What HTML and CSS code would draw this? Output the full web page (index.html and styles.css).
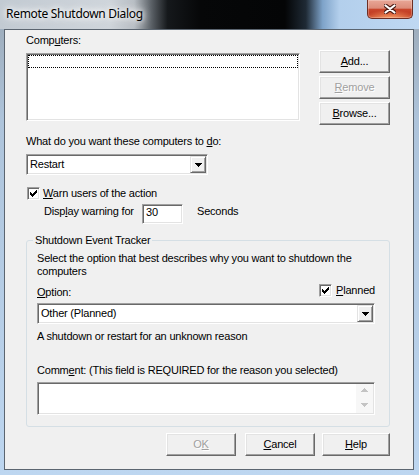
FILE: index.html
```html
<!DOCTYPE html>
<html>
<head>
<meta charset="utf-8">
<title>Remote Shutdown Dialog</title>
<link rel="stylesheet" href="styles.css">
</head>
<body>
<div class="window">
  <div class="titlebar">
    <span class="title">Remote Shutdown Dialog</span>
    <div class="close-btn">
      <svg width="12" height="10" viewBox="0 0 12 10">
        <path d="M1.5 1.5 L10.5 8.5 M10.5 1.5 L1.5 8.5" stroke="#4b1a12" stroke-width="4.2" stroke-linecap="round" fill="none"/>
        <path d="M1.5 1.5 L10.5 8.5 M10.5 1.5 L1.5 8.5" stroke="#ffffff" stroke-width="2.2" stroke-linecap="round" fill="none"/>
      </svg>
    </div>
  </div>
  <div class="client">
    <div class="top-row">
      <div class="computers">
        <div class="label">Comp<u>u</u>ters:</div>
        <div class="listbox sunken"><div class="focus-row"></div></div>
      </div>
      <div class="side-buttons">
        <div class="btn side"><span><u>A</u>dd...</span></div>
        <div class="btn side disabled"><span><u>R</u>emove</span></div>
        <div class="btn side"><span><u>B</u>rowse...</span></div>
      </div>
    </div>

    <div class="label action-label">What do you want these computers to <u>d</u>o:</div>
    <div class="combo sunken combo-action">
      <span class="combo-text">Restart</span>
      <span class="combo-btn"><svg width="7" height="4" viewBox="0 0 7 4"><path d="M0 0h7v1h-1v1h-1v1h-1v1h-1v-1h-1v-1h-1v-1h-1z" fill="#000"/></svg></span>
    </div>

    <div class="check-row warn-check">
      <span class="checkbox sunken"><svg width="7" height="7" viewBox="0 0 7 7"><path d="M0 2h1v3h-1zM1 3h1v3h-1zM2 4h1v3h-1zM3 3h1v3h-1zM4 2h1v3h-1zM5 1h1v3h-1zM6 0h1v3h-1z" fill="#000"/></svg></span>
      <span class="label"><u>W</u>arn users of the action</span>
    </div>

    <div class="warn-row">
      <span class="label warn-label">Disp<u>l</u>ay warning for</span>
      <div class="textbox sunken seconds-box">30</div>
      <span class="label seconds">Seconds</span>
    </div>

    <fieldset class="group">
      <legend>Shutdown Event Tracker</legend>
      <div class="group-body">
        <p class="label desc">Select the option that best describes why you want to shutdown the computers</p>
        <div class="option-row">
          <span class="label option-label"><u>O</u>ption:</span>
          <span class="planned">
            <span class="checkbox sunken"><svg width="7" height="7" viewBox="0 0 7 7"><path d="M0 2h1v3h-1zM1 3h1v3h-1zM2 4h1v3h-1zM3 3h1v3h-1zM4 2h1v3h-1zM5 1h1v3h-1zM6 0h1v3h-1z" fill="#000"/></svg></span>
            <span class="label"><u>P</u>lanned</span>
          </span>
        </div>
        <div class="combo sunken combo-reason">
          <span class="combo-text">Other (Planned)</span>
          <span class="combo-btn"><svg width="7" height="4" viewBox="0 0 7 4"><path d="M0 0h7v1h-1v1h-1v1h-1v1h-1v-1h-1v-1h-1v-1h-1z" fill="#000"/></svg></span>
        </div>
        <div class="label reason-desc">A shutdown or restart for an unknown reason</div>
        <div class="label comment-label">Comm<u>e</u>nt: (This field is REQUIRED for the reason you selected)</div>
        <div class="textarea sunken">
          <div class="ta-body"></div>
          <div class="scrollbar">
            <svg class="sb-arrow" width="7" height="4" viewBox="0 0 7 4"><path d="M3 0h1v1h1v1h1v1h1v1h-7v-1h1v-1h1v-1h1z" fill="#c4c4c4"/></svg>
            <svg class="sb-arrow" width="7" height="4" viewBox="0 0 7 4"><path d="M0 0h7v1h-1v1h-1v1h-1v1h-1v-1h-1v-1h-1v-1h-1z" fill="#c4c4c4"/></svg>
          </div>
        </div>
      </div>
    </fieldset>

    <div class="dialog-buttons">
      <div class="btn dlg ok disabled"><span>O<u>K</u></span></div>
      <div class="btn dlg cancel"><span><u>C</u>ancel</span></div>
      <div class="btn dlg help"><span><u>H</u>elp</span></div>
    </div>
  </div>
</div>
</body>
</html>
```

FILE: styles.css
```css
html, body {
  margin: 0;
  padding: 0;
}

body {
  font-family: "Liberation Sans", Arial, sans-serif;
  font-size: 11px;
  line-height: 13px;
  letter-spacing: -0.2px;
  color: #000;
}

.window {
  width: 419px;
  height: 475px;
  display: flex;
  flex-direction: column;
  overflow: hidden;
  background: linear-gradient(to bottom, #9aa7b4 0px, #aec4db 120px, #bdd6f0 475px);
}

/* ---------- title bar ---------- */
.titlebar {
  flex: none;
  height: 29px;
  display: flex;
  justify-content: space-between;
  align-items: flex-start;
  background: linear-gradient(to right,
    #c2cad2 0%, #cfd5db 26%, #b8bec4 32%, #5d6369 36%,
    #15181b 40%, #060708 48%, #040506 68%,
    #1f2a35 73%, #7ea3c9 77%, #b3cfec 81%, #bfd8f2 100%);
}

.title {
  font-family: "Noto Sans", "Open Sans", sans-serif;
  font-size: 12px;
  line-height: 16px;
  letter-spacing: -0.3px;
  padding: 6px 0 0 6px;
  color: #000;
  text-shadow: 0 0 5px #fff, 0 0 9px #fff, 0 0 12px rgba(255,255,255,0.9);
}

.close-btn {
  width: 46px;
  height: 19px;
  box-sizing: border-box;
  margin-right: 6px;
  border: 1px solid #6d2e24;
  border-top: none;
  border-radius: 0 0 5px 5px;
  display: flex;
  align-items: center;
  justify-content: center;
  background:
    radial-gradient(ellipse 60% 45% at 50% 100%, rgba(255,170,110,0.85), rgba(255,170,110,0) 100%),
    linear-gradient(to bottom, #e8a797 0%, #dc8c7a 45%, #c8462c 52%, #c03a21 80%, #c9492c 100%);
  box-shadow: inset 0 0 0 1px rgba(255,255,255,0.25);
}

/* ---------- client area ---------- */
.client {
  flex: 1;
  margin: 0 5px 5px 4px;
  border: 1px solid #5b6570;
  background: #f0f0f0;
  padding: 4px 0 0 21px;
}

.label u, .btn u, legend u {
  text-decoration: underline;
}

/* classic 3D edges */
.sunken {
  box-sizing: border-box;
  border: 1px solid;
  border-color: #a0a0a0 #ffffff #ffffff #a0a0a0;
  box-shadow: inset 1px 1px 0 #696969, inset -1px -1px 0 #e3e3e3;
  background: #fff;
}

.btn {
  box-sizing: border-box;
  height: 23px;
  display: flex;
  align-items: center;
  justify-content: center;
  background: #f0f0f0;
  border: 1px solid;
  border-color: #ffffff #696969 #696969 #ffffff;
  box-shadow: inset -1px -1px 0 #a0a0a0, inset 1px 1px 0 #e3e3e3;
}

.btn.disabled {
  color: #a0a0a0;
  text-shadow: 1px 1px 0 #ffffff;
}

/* ---------- top section ---------- */
.top-row {
  display: flex;
}

.computers {
  width: 274px;
}

.listbox {
  margin-top: 6px;
  height: 68px;
  padding: 1px;
}

.focus-row {
  height: 11px;
  border: 1px dotted #000;
}

.side-buttons {
  margin-left: 19px;
  padding-top: 16px;
  display: flex;
  flex-direction: column;
  gap: 3px;
}

.btn.side {
  width: 71px;
}

.action-label {
  margin-top: 10px;
}

/* ---------- combo ---------- */
.combo {
  height: 21px;
  padding: 1px;
  display: flex;
  align-items: center;
}

.combo-action {
  margin-top: 6px;
  width: 182px;
}

.combo-text {
  flex: 1;
  padding-left: 2px;
}

.combo-btn {
  box-sizing: border-box;
  width: 16px;
  height: 17px;
  display: flex;
  align-items: center;
  justify-content: center;
  background: #f0f0f0;
  border: 1px solid;
  border-color: #e3e3e3 #696969 #696969 #e3e3e3;
  box-shadow: inset 1px 1px 0 #ffffff, inset -1px -1px 0 #a0a0a0;
}

.combo-btn svg {
  margin-top: 1px;
}

/* ---------- checkboxes ---------- */
.check-row {
  display: flex;
  align-items: flex-start;
  gap: 3px;
}

.warn-check {
  margin-top: 12px;
  padding-left: 1px;
}

.checkbox {
  width: 13px;
  height: 13px;
  display: flex;
  align-items: center;
  justify-content: center;
  flex: none;
}

/* ---------- warning row ---------- */
.warn-row {
  margin-top: 4px;
  padding-left: 18px;
  display: flex;
  align-items: flex-start;
}

.warn-label {
  width: 98px;
  padding-top: 1px;
}

.textbox {
  height: 20px;
  padding: 1px 0 0 3px;
}

.seconds-box {
  width: 41px;
}

.seconds {
  margin-left: 14px;
  padding-top: 1px;
}

/* ---------- group box ---------- */
.group {
  margin: 10px 0 0 0;
  padding: 0;
  width: 364px;
  box-sizing: border-box;
  min-width: 0;
  border: 1px solid #d5dfe5;
  border-radius: 3px;
}

.group legend {
  margin-left: 6px;
  padding: 0 2px;
  line-height: 13px;
  font-size: 11px;
}

.group-body {
  padding: 5px 14px 11px 10px;
}

.desc {
  margin: 0;
}

.option-row {
  margin-top: 6px;
  display: flex;
  align-items: flex-start;
}

.option-label {
  padding-top: 2px;
}

.planned {
  margin-left: auto;
  display: flex;
  align-items: flex-start;
  gap: 4px;
}

.combo-reason {
  margin-top: 4px;
}

.reason-desc {
  margin-top: 6px;
}

.comment-label {
  margin-top: 21px;
}

.textarea {
  margin-top: 5px;
  height: 33px;
  padding: 1px;
  display: flex;
}

.ta-body {
  flex: 1;
}

.scrollbar {
  width: 17px;
  display: flex;
  flex-direction: column;
  align-items: center;
  justify-content: space-between;
  padding: 4px 0 6px;
  box-sizing: border-box;
  background: #f7f7f7;
}

/* ---------- dialog buttons ---------- */
.dialog-buttons {
  width: 364px;
  margin-top: 6px;
  display: flex;
  justify-content: flex-end;
}

.btn.ok {
  width: 70px;
}

.btn.cancel {
  width: 70px;
  margin-left: 9px;
}

.btn.help {
  width: 68px;
  margin-left: 7px;
}
```
